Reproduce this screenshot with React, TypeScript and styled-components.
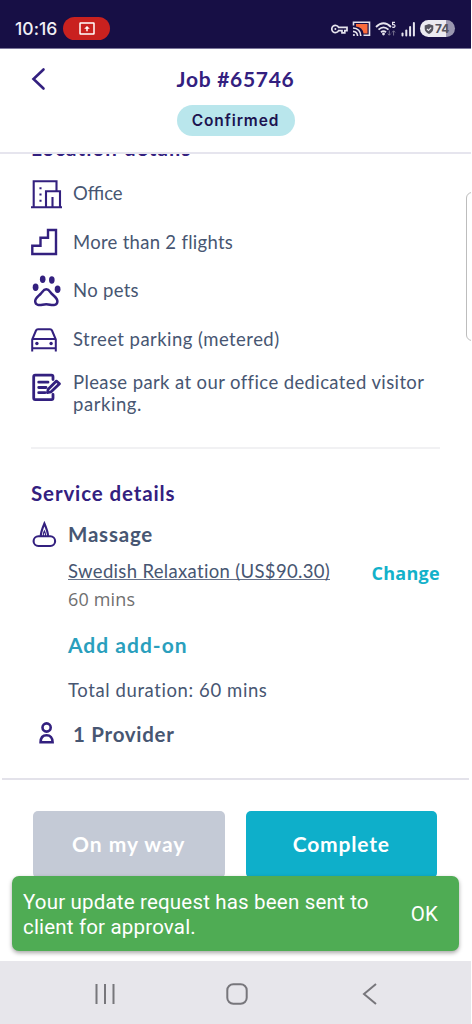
import React from 'react';
import styled, { createGlobalStyle } from 'styled-components';

const indigo = '#33207f';
const slate = '#475672';

const GlobalStyle = createGlobalStyle`
  * { box-sizing: border-box; }
  body { margin: 0; background: #fff; }
  svg { display: block; flex: none; }
  button { border: 0; padding: 0; background: none; }
`;

const Screen = styled.div`
  position: relative;
  width: 471px;
  height: 1024px;
  display: flex;
  flex-direction: column;
  overflow: hidden;
  background: #fff;
`;

const StatusBar = styled.div`
  height: 48px;
  flex: none;
  display: flex;
  align-items: center;
  padding: 9px 16px 0 15px;
  background: #170f45;
  color: #f1f0f5;
`;

const Clock = styled.span`
  width: 48px;
  font: 500 17.5px/20px Inter, sans-serif;
  letter-spacing: 0.05px;
`;

const CastPill = styled.span`
  width: 47px;
  height: 23px;
  border-radius: 12px;
  background: #c9211f;
  display: flex;
  align-items: center;
  justify-content: center;
`;

const StatusIcons = styled.div`
  margin-left: auto;
  display: flex;
  align-items: center;
  gap: 4px;
`;

const Battery = styled.span`
  width: 35px;
  height: 17px;
  border-radius: 9px;
  display: flex;
  align-items: center;
  gap: 1px;
  padding-left: 4px;
  background: linear-gradient(90deg, #ebeaf0 74%, #9a97b0 74%);
  color: #55545f;
  font: 700 12px/17px Inter, sans-serif;
`;

const Header = styled.header`
  height: 106px;
  flex: none;
  position: relative;
  display: flex;
  flex-direction: column;
  align-items: center;
  padding-top: 19px;
  border-top: 1px solid #7b769a;
  border-bottom: 2px solid #e6e5ee;
`;

const Back = styled.button`
  position: absolute;
  left: 31px;
  top: 18px;
`;

const Line = styled.span<{ $size?: number; $bold?: boolean; $color?: string; $track?: number; $lh?: number; $sans?: boolean }>`
  font-family: ${p => (p.$sans ? '"Open Sans", sans-serif' : 'Lato, sans-serif')};
  font-size: ${p => p.$size ?? 18.5}px;
  font-weight: ${p => (p.$bold ? 700 : 400)};
  line-height: ${p => p.$lh ?? 22}px;
  letter-spacing: ${p => p.$track ?? 0.3}px;
  color: ${p => p.$color ?? slate};
  white-space: nowrap;
`;

const Status = styled.span`
  width: 118px;
  height: 31px;
  margin-top: 15px;
  border-radius: 16px;
  background: #b9e6ec;
  color: #1c1450;
  text-align: center;
  font: 600 15.5px/31px Inter, sans-serif;
  letter-spacing: 0.9px;
`;

const Main = styled.main`
  height: 624px;
  flex: none;
  overflow: hidden;
  padding: 0 31px;
  display: flex;
  flex-direction: column;
`;

const Clipped = styled.div`
  height: 22px;
  flex: none;
  margin: -17px 0 10px;
  display: flex;
`;

const Row = styled.div`
  height: 48.6px;
  flex: none;
  display: flex;
  align-items: center;
`;

const NoteRow = styled(Row)`
  height: 44px;
  margin-top: 8px;
  align-items: flex-start;
`;

const IconSlot = styled.span<{ $w?: number; $indent?: number; $drop?: number }>`
  width: ${p => p.$w ?? 42}px;
  padding-left: ${p => p.$indent ?? 0}px;
  padding-top: ${p => p.$drop ?? 0}px;
  flex: none;
`;

const Note = styled.div`
  display: flex;
  flex-direction: column;
`;

const Divider = styled.div`
  height: 2px;
  flex: none;
  margin: 32px 0 33px;
  background: #f1f1f3;
`;

const ServiceHead = styled.div`
  display: flex;
  align-items: center;
  height: 28px;
  margin-top: 16px;
`;

const Service = styled.div`
  display: flex;
  justify-content: space-between;
  margin: 12px 0 0 37px;
`;

const Stack = styled.div`
  display: flex;
  flex-direction: column;
  align-items: flex-start;
`;

const Underlined = styled(Line)`
  height: 20px;
  border-bottom: 1px solid #667189;
`;

const Extras = styled(Stack)`
  margin: 16px 0 0 37px;
  gap: 23px;
`;

const Provider = styled.div`
  display: flex;
  align-items: center;
  height: 28px;
  margin-top: 19px;
`;

const Footer = styled.footer`
  height: 183px;
  flex: none;
  margin: 0 2px;
  padding: 31px 32px 0 31px;
  border-top: 2px solid #e3e2ea;
  display: flex;
  gap: 21px;
`;

const Action = styled.button<{ $bg: string }>`
  flex: 1;
  height: 67px;
  padding-bottom: 2px;
  border-radius: 5px;
  background: ${p => p.$bg};
`;

const EdgeHandle = styled.div`
  position: absolute;
  right: -10px;
  top: 192px;
  width: 15px;
  height: 149px;
  border: 1.5px solid #bdbdbd;
  border-radius: 6px;
  background: #fff;
`;

const Snackbar = styled.div`
  position: absolute;
  left: 12px;
  top: 876px;
  width: 447px;
  height: 75px;
  border-radius: 7px;
  background: #4fac54;
  box-shadow: 0 2px 4px rgba(0, 0, 0, 0.35);
  color: #fff;
  display: flex;
  align-items: center;
  justify-content: space-between;
  padding: 2px 21px 0 11px;
  font: 400 20.5px/25px Roboto, sans-serif;
  letter-spacing: 0.18px;
`;

const NavBar = styled.nav`
  flex: 1;
  background: #e7e6eb;
  display: flex;
  align-items: center;
  justify-content: space-between;
  padding: 2px 93px 0 92px;
`;

const stroke = { fill: 'none', stroke: indigo, strokeWidth: 2 } as const;

const OfficeIcon = () => (
  <svg width="31" height="30" viewBox="0 0 31 30" {...stroke} strokeWidth={2.1}>
    <path d="M0 28.3H31M2.7 28V2.3H25.5V12M15 28V12.3H29V28M21.5 28V18" />
    <path d="M9.5 8.2v2M9.5 14.4v2M9.5 20.7v2" />
  </svg>
);

const StairsIcon = () => (
  <svg width="27" height="28" viewBox="0 0 27 28" {...stroke} strokeWidth={2.4}>
    <path d="M1.3 26V17.7H9.5V9.7H17V2H25V26Z" />
  </svg>
);

const PawIcon = () => (
  <svg width="31" height="34" viewBox="0 0 31 34" {...stroke} strokeWidth={2.5}>
    <path d="M15.3 15.3C12.5 15.3 11.5 18 9.5 20C6.5 23 4 24.5 4.2 27.5C4.5 31.5 8.5 31.4 11.5 30.7Q15.3 29.8 19 30.7C22 31.4 26.2 31.5 26.4 27.5C26.6 24.5 24 23 21 20C19 18 18.1 15.3 15.3 15.3Z" />
    <g fill={indigo} stroke="none">
      <ellipse cx="4.6" cy="13.2" rx="2.9" ry="3.7" />
      <ellipse cx="11.7" cy="5.2" rx="2.8" ry="3.7" />
      <ellipse cx="20.8" cy="6" rx="2.8" ry="3.7" />
      <ellipse cx="26.6" cy="15.2" rx="2.9" ry="3.7" />
    </g>
  </svg>
);

const CarIcon = () => (
  <svg width="27" height="24" viewBox="0 0 27 24" {...stroke} strokeWidth={2}>
    <path d="M1.2 23.5V11.5L5 2.5Q5.5 1.3 7 1.3H19Q20.5 1.3 21 2.5L24.8 11.5V23.5M1.2 11H24.8M1.2 20.3H24.8" />
    <circle cx="5.9" cy="15.5" r="1.7" fill={indigo} stroke="none" />
    <circle cx="20.1" cy="15.5" r="1.7" fill={indigo} stroke="none" />
  </svg>
);

const NoteIcon = () => (
  <svg width="31" height="30" viewBox="0 0 31 30" {...stroke} strokeWidth={2.8} strokeLinecap="round" strokeLinejoin="round">
    <path d="M22 6.5V3.7Q22 2.2 20.5 2.2H4.2Q2.7 2.2 2.7 3.7V25Q2.7 26.6 4.2 26.6H20.5Q22 26.6 22 25V21.5" />
    <path d="M7.7 9.2H17M7.7 14.5H15M7.7 19.7H14" />
    <path d="M16.4 19.7L17.2 16.3L25.4 8.1L28.5 10.8L19.9 19L16.4 19.7Z" />
  </svg>
);

const CandleIcon = () => (
  <svg width="26" height="27" viewBox="0 0 26 27" {...stroke} strokeWidth={2.1}>
    <rect x="2.6" y="15.3" width="21.5" height="9.7" rx="4.8" />
    <path d="M9.8 15Q9.8 11 13.4 2.5Q17 11 17 15" />
    <path d="M12.3 15Q12 12.5 13.4 10Q14.8 12.5 14.5 15" strokeWidth="1.3" />
  </svg>
);

const PersonIcon = () => (
  <svg width="16" height="24" viewBox="0 0 16 24" {...stroke} strokeWidth={2.6}>
    <circle cx="7.6" cy="5.5" r="4.1" />
    <path d="M1.6 20.3C1.6 15.8 4 13.2 7.6 13.2S13.6 15.8 13.6 20.3Z" />
  </svg>
);

const details = [
  { icon: <OfficeIcon />, text: 'Office', track: 0 },
  { icon: <StairsIcon />, text: 'More than 2 flights', track: 0.29 },
  { icon: <PawIcon />, text: 'No pets', track: 0.3 },
  { icon: <CarIcon />, text: 'Street parking (metered)', track: 0.45 },
];

export default function App() {
  return (
    <Screen>
      <GlobalStyle />
      <StatusBar>
        <Clock>10:16</Clock>
        <CastPill>
          <svg width="16" height="13" viewBox="0 0 16 13" fill="none" stroke="#fff" strokeWidth="1.5">
            <rect x="1" y="1" width="14" height="11" rx="0.5" />
            <path d="M8 9.2V5.5" />
            <path d="M5.2 6.8L8 3.9L10.8 6.8Z" fill="#fff" stroke="none" />
          </svg>
        </CastPill>
        <StatusIcons>
          <svg width="17" height="10" viewBox="0 0 17 10" fill="none" stroke="#e6e4ee" strokeWidth="1.7">
            <path d="M7.6 3.4A3.6 3.6 0 1 0 7.6 6.6H11V8.8H13.8V6.6H16V3.4Z" />
            <circle cx="4.4" cy="5" r="1" fill="#e6e4ee" stroke="none" />
          </svg>
          <svg width="19" height="16" viewBox="0 0 19 16" fill="none" stroke="#e6e4ee" strokeWidth="1.6">
            <path d="M4 3H15.5V12.5H11.5Q10.5 6 4 5.5Z" fill="#fb6b3c" stroke="none" />
            <path d="M1.5 4.5V1.2H17.5V14.2H11.5" />
            <path d="M1 7Q8.5 7.5 8.8 15M1 10.4Q5.3 10.7 5.6 15" />
            <circle cx="1.9" cy="14" r="1.1" fill="#e6e4ee" stroke="none" />
          </svg>
          <svg width="22" height="16" viewBox="0 0 22 16" fill="none" stroke="#e6e4ee" strokeWidth="1.8">
            <path d="M1 6Q8.5 -1.5 16 6M3.5 8.7Q8.5 4 13.5 8.7M6 11.2Q8.5 9 11 11.2" />
            <circle cx="8.5" cy="13" r="1.4" fill="#e6e4ee" stroke="none" />
            <path d="M20 1.3H17.6V3.6Q20 3.3 20 5T17.2 6.2" strokeWidth="1.2" />
            <path d="M14.3 9.5V14.2M12.8 12.6L14.3 14.2L15.8 12.6M18.6 14.5V9.8M17.1 11.4L18.6 9.8L20.1 11.4" stroke="#77728f" strokeWidth="1" />
          </svg>
          <svg width="15" height="16" viewBox="0 0 15 16" fill="#e6e4ee">
            <rect x="0.5" y="11.5" width="2" height="4" rx="1" />
            <rect x="4.3" y="8.5" width="2" height="7" rx="1" />
            <rect x="8.1" y="5" width="2" height="10.5" rx="1" />
            <rect x="11.9" y="1" width="2" height="14.5" rx="1" />
          </svg>
          <Battery>
            <svg width="10" height="10" viewBox="0 0 10 10">
              <path d="M5 0L9.3 1.5V4.8Q9 8.3 5 10Q1 8.3 .7 4.8V1.5Z" fill="#55545f" />
              <path d="M3 5L4.5 6.4L7.2 3.6" fill="none" stroke="#ebeaf0" strokeWidth="1.1" />
            </svg>
            74
          </Battery>
        </StatusIcons>
      </StatusBar>

      <Header>
        <Back aria-label="Back">
          <svg width="15" height="24" viewBox="0 0 15 24" {...stroke} strokeWidth={2.6} strokeLinecap="round">
            <path d="M12.5 2.5L2.5 12L12.5 21.5" />
          </svg>
        </Back>
        <Line $bold $size={21} $track={0.7} $color={indigo}>Job #65746</Line>
        <Status>Confirmed</Status>
      </Header>

      <Main>
        <Clipped><Line $bold $size={20.5} $track={1.1} $color={indigo}>Location details</Line></Clipped>
        {details.map(d => (
          <Row key={d.text}>
            <IconSlot $drop={1}>{d.icon}</IconSlot>
            <Line $track={d.track}>{d.text}</Line>
          </Row>
        ))}
        <NoteRow>
          <IconSlot $drop={2}><NoteIcon /></IconSlot>
          <Note>
            <Line $track={0.39}>Please park at our office dedicated visitor</Line>
            <Line $track={0.55}>parking.</Line>
          </Note>
        </NoteRow>
        <Divider />
        <Line $bold $size={20.5} $track={0.87} $color={indigo}>Service details</Line>
        <ServiceHead>
          <IconSlot $w={37} $drop={1}><CandleIcon /></IconSlot>
          <Line $bold $size={20.5} $track={0.8}>Massage</Line>
        </ServiceHead>
        <Service>
          <Stack>
            <Underlined $track={0.33}>Swedish Relaxation (US$90.30)</Underlined>
            <Line $sans $size={18} $lh={38} $track={0.15} $color="#6f6f6f">60 mins</Line>
          </Stack>
          <Line $sans $bold $size={18} $lh={26} $color="#12b1ca">Change</Line>
        </Service>
        <Extras>
          <Line $bold $size={21} $track={1} $color="#2a9fbd">Add add-on</Line>
          <Line $track={0.6}>Total duration: 60 mins</Line>
        </Extras>
        <Provider>
          <IconSlot $indent={8}><PersonIcon /></IconSlot>
          <Line $bold $size={20.5} $track={0.72}>1 Provider</Line>
        </Provider>
      </Main>

      <Footer>
        <Action $bg="#c4cad6"><Line $bold $size={21} $track={1} $color="#fff">On my way</Line></Action>
        <Action $bg="#0eafca"><Line $bold $size={21} $track={0.8} $color="#fff">Complete</Line></Action>
      </Footer>

      <NavBar>
        <svg width="26" height="22" viewBox="0 0 26 22" fill="none" stroke="#77767b" strokeWidth="2">
          <path d="M4.5 1V21M13 1V21M21.5 1V21" />
        </svg>
        <svg width="22" height="22" viewBox="3 0 22 22" overflow="visible" fill="none" stroke="#77767b" strokeWidth="2">
          <rect x="1.3" y="1.3" width="19.4" height="19.4" rx="6" />
        </svg>
        <svg width="16" height="22" viewBox="0 0 16 22" fill="none" stroke="#77767b" strokeWidth="2">
          <path d="M14 1L2 11L14 21" />
        </svg>
      </NavBar>

      <EdgeHandle />
      <Snackbar>
        <span>Your update request has been sent to<br />client for approval.</span>
        <span>OK</span>
      </Snackbar>
    </Screen>
  );
}
